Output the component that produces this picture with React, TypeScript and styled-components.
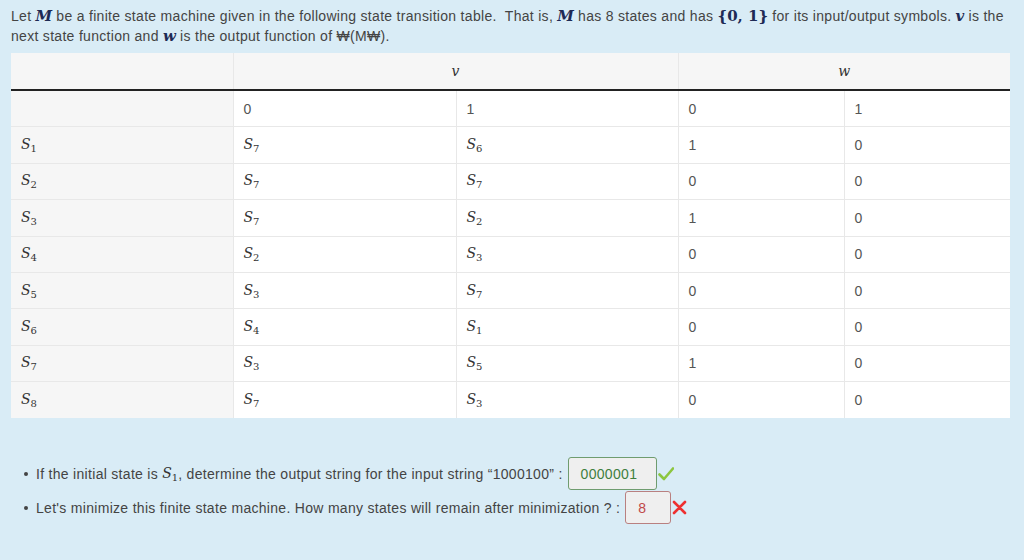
import React from "react";
import styled, { createGlobalStyle } from "styled-components";

const Global = createGlobalStyle`
  html, body { margin: 0; padding: 0; background: #d9ecf6; }
  body { font-family: "Liberation Sans", "Noto Sans CJK KR", sans-serif; }
`;

const Page = styled.div`
  padding: 7px 14px 0 11px;
  color: #444;
  font-size: 14px;
  letter-spacing: 0.3px;
  width: 1024px;
  height: 560px;
  box-sizing: border-box;
`;

const Intro = styled.p`
  margin: 0;
  line-height: 19.5px;
  white-space: nowrap;
`;

const MathVar = styled.span<{ $bold?: boolean }>`
  font-family: "DejaVu Serif", "Liberation Serif", serif;
  font-style: italic;
  font-weight: ${(p) => (p.$bold ? 700 : 400)};
  font-size: ${(p) => (p.$bold ? "15px" : "14px")};
  letter-spacing: 0;
  color: ${(p) => (p.$bold ? "#1e2a55" : "#333")};
`;

const MathRoman = styled.span`
  font-family: "DejaVu Serif", "Liberation Serif", serif;
  font-weight: 700;
  font-size: 15px;
  letter-spacing: 0;
  color: #1e2a55;
`;

const Table = styled.table`
  margin-top: 7px;
  width: 999px;
  border-collapse: collapse;
  table-layout: fixed;
  background: #fff;
`;

const HeadCell = styled.th`
  background: #f6f6f6;
  height: 36px;
  padding: 0;
  font-weight: 400;
  text-align: center;
  border-left: 1px solid #e8e8e8;
  border-bottom: 2px solid #222;
  &:first-child { border-left: none; }
`;

const Cell = styled.td<{ $label?: boolean }>`
  height: 35.4px;
  padding: 0 10px;
  text-align: left;
  background: ${(p) => (p.$label ? "#f6f6f6" : "#fff")};
  border-left: 1px solid #e8e8e8;
  border-bottom: 1px solid #e8e8e8;
  color: #555;
  font-size: 14px;
  &:first-child { border-left: none; }
`;

const Row = styled.tr`
  &:last-child td { border-bottom: none; }
`;

const SubSym = styled.span`
  font-family: "DejaVu Serif", "Liberation Serif", serif;
  font-size: 14px;
  letter-spacing: 0;
  color: #333;
  white-space: nowrap;
  i { font-style: italic; }
  sub { font-style: normal; font-size: 10px; vertical-align: -3px; }
`;

const List = styled.ul`
  margin: 39px 0 0 0;
  padding: 0 0 0 13px;
  list-style: none;
`;

const Item = styled.li`
  position: relative;
  display: flex;
  align-items: center;
  height: 34px;
  padding-left: 12px;
  white-space: nowrap;
  &::before {
    content: "";
    position: absolute;
    left: 0;
    top: 15px;
    width: 4px;
    height: 4px;
    border-radius: 50%;
    background: #444;
  }
`;

const Answer = styled.span<{ $ok: boolean; $w: number }>`
  display: inline-flex;
  align-items: center;
  box-sizing: border-box;
  width: ${(p) => p.$w}px;
  height: 33px;
  margin-left: 5px;
  padding-left: 12px;
  border: 1px solid ${(p) => (p.$ok ? "#6f9c6f" : "#b98080")};
  border-radius: 3px;
  background: #efefef;
  color: ${(p) => (p.$ok ? "#3e7e3e" : "#c04848")};
  font-size: 14px;
`;

const Mark = styled.span`
  display: inline-flex;
  margin-left: 1px;
`;

const S = ({ n }: { n: number }) => (
  <SubSym>
    <i>S</i>
    <sub>{n}</sub>
  </SubSym>
);

const rows: [number, number, number, number, number][] = [
  [1, 7, 6, 1, 0],
  [2, 7, 7, 0, 0],
  [3, 7, 2, 1, 0],
  [4, 2, 3, 0, 0],
  [5, 3, 7, 0, 0],
  [6, 4, 1, 0, 0],
  [7, 3, 5, 1, 0],
  [8, 7, 3, 0, 0],
];

export default function App() {
  return (
    <Page>
      <Global />
      <Intro>
        Let <MathVar $bold>M</MathVar> be a finite state machine given in the following state transition table.&nbsp; That is, <MathVar $bold>M</MathVar> has 8 states and has <MathRoman>{"{0, 1}"}</MathRoman> for its input/output symbols. <MathVar $bold>v</MathVar> is the
        <br />
        next state function and <MathVar $bold>w</MathVar> is the output function of ₩(M₩).
      </Intro>
      <Table>
        <colgroup>
          <col style={{ width: 222 }} />
          <col style={{ width: 223 }} />
          <col style={{ width: 222 }} />
          <col style={{ width: 166 }} />
          <col style={{ width: 166 }} />
        </colgroup>
        <thead>
          <tr>
            <HeadCell />
            <HeadCell colSpan={2}>
              <MathVar>v</MathVar>
            </HeadCell>
            <HeadCell colSpan={2}>
              <MathVar>w</MathVar>
            </HeadCell>
          </tr>
        </thead>
        <tbody>
          <Row>
            <Cell $label />
            <Cell>0</Cell>
            <Cell>1</Cell>
            <Cell>0</Cell>
            <Cell>1</Cell>
          </Row>
          {rows.map(([s, a, b, c, d]) => (
            <Row key={s}>
              <Cell $label>
                <S n={s} />
              </Cell>
              <Cell>
                <S n={a} />
              </Cell>
              <Cell>
                <S n={b} />
              </Cell>
              <Cell>{c}</Cell>
              <Cell>{d}</Cell>
            </Row>
          ))}
        </tbody>
      </Table>
      <List>
        <Item>
          If the initial state is&nbsp;<S n={1} />, determine the output string for the input string “1000100” :
          <Answer $ok $w={89}>0000001</Answer>
          <Mark>
            <svg width="16" height="16" viewBox="0 0 16 16">
              <path d="M1.5 8.5 L6 13 L15 2.5" fill="none" stroke="#8cc63f" strokeWidth="2.6" strokeLinecap="round" strokeLinejoin="round" />
            </svg>
          </Mark>
        </Item>
        <Item>
          Let's minimize this finite state machine. How many states will remain after minimization ? :
          <Answer $ok={false} $w={46}>8</Answer>
          <Mark>
            <svg width="15" height="15" viewBox="0 0 15 15">
              <path d="M2 2 L13 13 M13 2 L2 13" fill="none" stroke="#ee3030" strokeWidth="2.6" strokeLinecap="round" />
            </svg>
          </Mark>
        </Item>
      </List>
    </Page>
  );
}
